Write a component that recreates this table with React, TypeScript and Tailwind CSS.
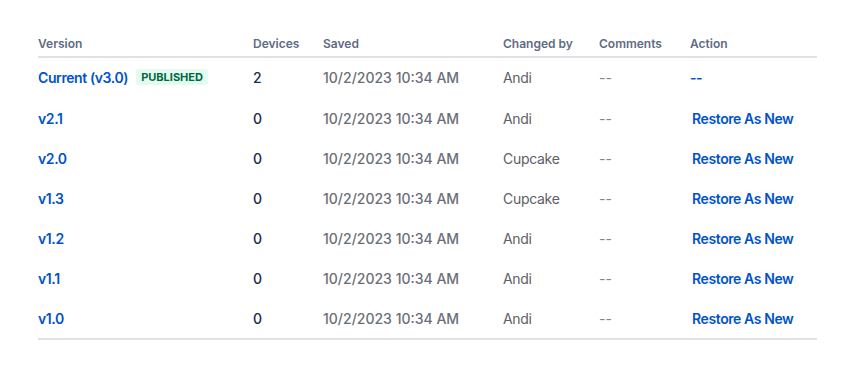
import React from 'react';

const ROWS = [
  { version: 'Current (v3.0)', published: true, devices: 2, saved: '10/2/2023 10:34 AM', by: 'Andi', comments: '--', action: '--' },
  { version: 'v2.1', devices: 0, saved: '10/2/2023 10:34 AM', by: 'Andi', comments: '--', action: 'Restore As New' },
  { version: 'v2.0', devices: 0, saved: '10/2/2023 10:34 AM', by: 'Cupcake', comments: '--', action: 'Restore As New' },
  { version: 'v1.3', devices: 0, saved: '10/2/2023 10:34 AM', by: 'Cupcake', comments: '--', action: 'Restore As New' },
  { version: 'v1.2', devices: 0, saved: '10/2/2023 10:34 AM', by: 'Andi', comments: '--', action: 'Restore As New' },
  { version: 'v1.1', devices: 0, saved: '10/2/2023 10:34 AM', by: 'Andi', comments: '--', action: 'Restore As New' },
  { version: 'v1.0', devices: 0, saved: '10/2/2023 10:34 AM', by: 'Andi', comments: '--', action: 'Restore As New' },
];

const COLS = 'grid grid-cols-[215px_70px_180px_96px_91px_1fr]';

export default function App() {
  return (
    <div className="w-[858px] h-[366px] bg-white px-[38px] pt-[36px] font-['Inter',sans-serif]">
      <div className="w-[779px]">
        <div className={`${COLS} border-b-2 border-[#dfe1e6] pb-[4px] text-[12px] leading-[16px] font-semibold text-[#5e6c84]`}>
          <div>Version</div>
          <div>Devices</div>
          <div>Saved</div>
          <div>Changed by</div>
          <div>Comments</div>
          <div>Action</div>
        </div>
        <div className="border-b-2 border-[#dfe1e6]">
          {ROWS.map((r, i) => (
            <div key={r.version} className={`${COLS} h-[40px] items-center text-[14px] ${i === 0 ? 'pb-[2px]' : ''}`}>
              <div className="flex items-center gap-[8px]">
                <span className="text-[#0052cc] font-semibold tracking-[-0.4px]">{r.version}</span>
                {r.published && (
                  <span className="h-[16px] flex items-center bg-[#e3fcef] text-[#006644] text-[11px] font-bold px-[5px] rounded-[3px]">PUBLISHED</span>
                )}
              </div>
              <div className="text-[#172b4d] font-medium">{r.devices}</div>
              <div className="text-[#6b6e76] font-medium">{r.saved}</div>
              <div className="text-[#5e6066] tracking-[-0.3px]">{r.by}</div>
              <div className="text-[#7a869a]">{r.comments}</div>
              <div className={`text-[#0052cc] font-semibold tracking-[-0.4px] ${r.action === '--' ? '' : 'pl-[2px]'}`}>{r.action}</div>
            </div>
          ))}
        </div>
      </div>
    </div>
  );
}
